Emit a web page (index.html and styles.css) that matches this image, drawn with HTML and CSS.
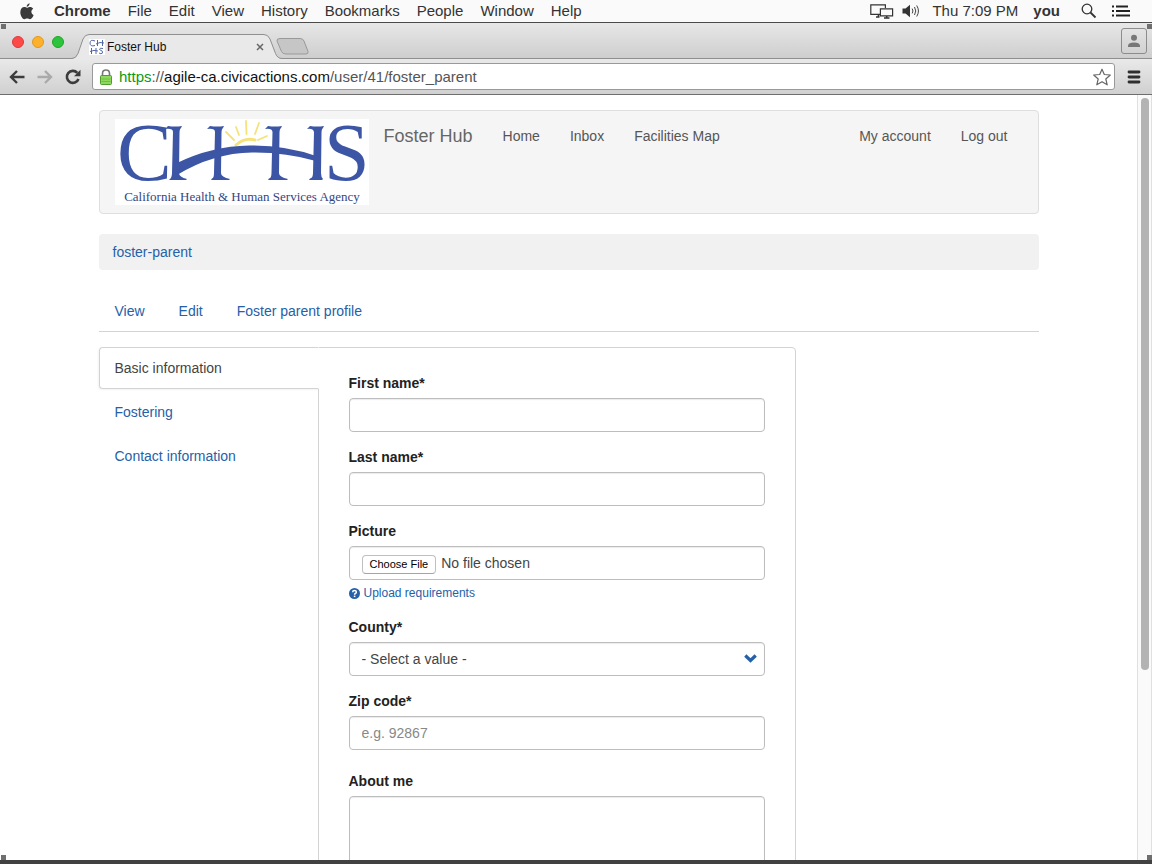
FILE: index.html
```html
<!DOCTYPE html>
<html lang="en">
<head>
<meta charset="utf-8">
<title>Foster Hub</title>
<link rel="stylesheet" href="styles.css">
</head>
<body>
<div class="desktop">
  <header class="menubar">
    <svg class="apple" width="14" height="17" viewBox="0 0 14 17" aria-hidden="true"><path d="M9.6 0.3C9.7 2 8.400 3.700 6.700 3.800C6.500 2.200 8 0.500 9.600 0.300ZM6.900 4.800C7.600 4.800 8.500 4 10 4C11.300 4 12.500 4.700 13.200 5.700C10.500 7.300 11 10.800 13.600 11.900C13 13.600 11.600 16.200 10 16.200C8.900 16.200 8.500 15.500 7.200 15.500C5.900 15.500 5.400 16.200 4.400 16.200C2.700 16.200 0.300 12.700 0.300 9.200C0.300 6 2.300 4.100 4.300 4.100C5.500 4.100 6.300 4.800 6.900 4.800Z" fill="#3a3a3a"/></svg>
    <nav class="menus" aria-label="Application menu">
      <button class="menu menu-app">Chrome</button>
      <button class="menu">File</button>
      <button class="menu">Edit</button>
      <button class="menu">View</button>
      <button class="menu">History</button>
      <button class="menu">Bookmarks</button>
      <button class="menu">People</button>
      <button class="menu">Window</button>
      <button class="menu">Help</button>
    </nav>
    <div class="status">
      <svg width="24" height="15" viewBox="0 0 24 15" fill="none" stroke="#333" stroke-width="1.200" aria-hidden="true"><path d="M10 10.400H0.800V0.800H15.400V4"/><path d="M10.400 4.800H22.600V11.800H10.400Z"/><path d="M6 13H9.500M14 14H19.500M8.500 10.500V13M16.700 12V14" stroke-width="1.600"/></svg>
      <svg class="speaker" width="18" height="14" viewBox="0 0 18 14" aria-hidden="true"><path d="M0.500 4.500H3.500L8 0.800V13.200L3.500 9.500H0.500Z" fill="#333"/><path d="M10.200 4.600Q11.700 7 10.200 9.400M12.500 3Q15 7 12.500 11M14.700 1.500Q18.200 7 14.700 12.500" fill="none" stroke="#444"/></svg>
      <span class="clock">Thu 7:09 PM</span>
      <span class="user">you</span>
      <svg class="search" width="16" height="16" viewBox="0 0 16 16" fill="none" stroke="#333" aria-hidden="true"><circle cx="6" cy="6" r="4.800" stroke-width="1.300"/><path d="M9.500 9.500L14.500 14.500" stroke-width="1.800"/></svg>
      <svg width="18" height="12" viewBox="0 0 18 12" stroke="#222" stroke-width="2" aria-hidden="true"><path d="M0 1.500H2M0 6H2M0 10.500H2M4 1.500H16M4 6H18M4 10.500H18"/></svg>
    </div>
  </header>

  <section class="window">
    <i class="mark mark-tl"></i><i class="mark mark-tr"></i><i class="mark mark-bl"></i><i class="mark mark-br"></i>
    <div class="tabstrip">
      <div class="lights">
        <button class="light red" aria-label="Close"></button>
        <button class="light amber" aria-label="Minimize"></button>
        <button class="light green" aria-label="Zoom"></button>
      </div>
      <div class="tab">
        <svg class="tab-shape" viewBox="0 0 210 25" preserveAspectRatio="none" aria-hidden="true"><path d="M0 24.500Q4 24.500 6 19.500L11 5Q13 0.500 17 0.500H192Q196 0.500 198 5L203.500 19.500Q205.500 24.500 210 24.500V25H0Z" fill="#e9e9e9"/><path d="M0 24.500Q4 24.500 6 19.500L11 5Q13 0.500 17 0.500H192Q196 0.500 198 5L203.500 19.500Q205.500 24.500 210 24.500" fill="none" stroke="#8f8f8f"/></svg>
        <svg class="favicon" width="16" height="16" viewBox="0 0 16 16" aria-hidden="true"><rect width="16" height="16" fill="#fff"/><g fill="none" stroke="#5268a8"><path d="M6 2Q1 0 1 4T6 6.500M8.500 1V7M13.500 1V7M7 5Q11 2.500 15 4M2.500 9V15M7 9V15M1 12.500Q5 10.500 9 12M14 9.500Q10.500 8.500 10.500 10.500Q14.500 12 13.500 14Q12 15.500 10 14"/></g></svg>
        <span class="tab-title">Foster Hub</span>
        <button class="tab-close" aria-label="Close tab"><svg width="8" height="8" viewBox="0 0 8 8" stroke="#666" stroke-width="1.500"><path d="M1 1L7 7M7 1L1 7"/></svg></button>
      </div>
      <button class="newtab" aria-label="New tab"><svg width="33" height="17" viewBox="0 0 33 17"><path d="M4 0.500H24Q27 0.500 28 3L32 13.500Q32.500 16 30 16H10Q6.500 16 5.500 13.500L1 3Q0.500 0.500 4 0.500Z" fill="#c6c6c6" stroke="#999"/></svg></button>
      <button class="profile" aria-label="Profile"><svg width="14" height="14" viewBox="0 0 14 14" fill="#777"><circle cx="7" cy="3.800" r="3"/><path d="M1 13V11.500Q1.500 8.500 7 8.500T13 11.500V13Z"/></svg></button>
    </div>

    <div class="toolbar">
      <button class="tool" aria-label="Back"><svg width="16" height="14" viewBox="0 0 16 14" fill="none" stroke="#3c3c3c" stroke-width="2.400"><path d="M15.500 7H2.500M8 1L2 7L8 13"/></svg></button>
      <button class="tool" aria-label="Forward"><svg width="16" height="14" viewBox="0 0 16 14" fill="none" stroke="#aaa" stroke-width="2.400"><path d="M0.500 7H13.500M8 1L14 7L8 13"/></svg></button>
      <button class="tool" aria-label="Reload"><svg width="16" height="16" viewBox="0 0 16 16"><path d="M12.300 3.800A6 6 0 1 0 13.500 10" fill="none" stroke="#3c3c3c" stroke-width="2.600"/><path d="M15.500 0.800V7.300H9Z" fill="#3c3c3c"/></svg></button>
      <div class="omnibox">
        <svg class="lock" width="12" height="16" viewBox="0 0 12 16" aria-hidden="true"><path d="M2.500 8V4.500Q2.500 1 6 1T9.500 4.500V8" fill="none" stroke="#777" stroke-width="1.600"/><rect x="0.500" y="6.500" width="11" height="9" rx="1" fill="#8ed860" stroke="#4f9d2d"/><path d="M1.500 10H10.500M1.500 12.500H10.500" stroke="#6cc03c"/></svg>
        <span class="url" role="textbox" contenteditable="true" spellcheck="false" aria-label="Address"><span class="url-scheme">https</span><span class="url-path">://</span>agile-ca.civicactions.com<span class="url-path">/user/41/foster_parent</span></span>
        <button class="star" aria-label="Bookmark this page"><svg width="20" height="18" viewBox="0 0 20 18"><path d="M10 1.200L12.300 6.500L18.300 7L13.800 11L15.200 16.800L10 13.700L4.800 16.800L6.200 11L1.700 7L7.700 6.500Z" fill="#fff" stroke="#666" stroke-width="1.200" stroke-linejoin="round"/></svg></button>
      </div>
      <button class="tool" aria-label="Menu"><svg width="14" height="14" viewBox="0 0 14 14" stroke="#2e2e2e" stroke-width="2.800" stroke-linecap="round"><path d="M2 2H12M2 7H12M2 12H12"/></svg></button>
    </div>

    <div class="viewport">
      <main class="page">
        <div class="container">
          <nav class="navbar" aria-label="Main">
            <a class="logo" href="#"><svg width="254" height="86" viewBox="0 0 254 86" role="img" aria-label="California Health and Human Services Agency">
              <rect width="254" height="86" fill="#fff"/>
              <g stroke="#f5e27a" stroke-width="1.800" fill="none" stroke-linecap="round"><path d="M121 26Q130 18 140 21" stroke-width="3"/><path d="M111 13L119 21M121 8L124 16M131 2L131.500 15M144 4L140 15M152 17L143 21"/></g>
              <g fill="#3c55a5">
                <path d="M50 10L53 7Q60 8 67 7L66 9Q64.500 10 64.500 14L64 54Q64 58 72 60L71 61H54Q57 59 57 54L58 13Q58 9 50 10Z"/>
                <path d="M92 10L95 7Q102 8 109 7L108 9Q106.500 10 106.500 14L106 54Q106 58 115 60L114 61H96L97 59.500Q99 59 99 54L100 13Q100 9 92 10Z"/>
                <path d="M150 10L153 7Q160 8 167 7L166 9Q164.500 10 164.500 14L164 54Q164 58 173 60L172 61H153L154 59.500Q156.500 59 156.500 54L157.500 13Q157 9 150 10Z"/>
                <path d="M192 10L195 7Q202 8 209 7L208 9Q206.500 10 206.500 14L206 54Q206 58 208 60L207 61H194L195 59.500Q198 59 198 54L199 13Q198 9 192 10Z"/>
                <path d="M62 44Q97 27 134 26.500Q170 26 201 37L201 42Q170 33 137 33.500Q98 34 62 56Z"/>
              </g>
              <g class="logo-letters"><text x="2" y="61">C</text><text x="209" y="61">S</text></g>
              <text class="logo-caption" x="127" y="82" text-anchor="middle">California Health &amp; Human Services Agency</text>
            </svg></a>
            <a class="brand" href="#">Foster Hub</a>
            <ul class="links">
              <li><a href="#">Home</a></li>
              <li><a href="#">Inbox</a></li>
              <li><a href="#">Facilities Map</a></li>
            </ul>
            <ul class="links links-right">
              <li><a href="#">My account</a></li>
              <li><a href="#">Log out</a></li>
            </ul>
          </nav>

          <nav class="breadcrumb" aria-label="Breadcrumb"><a href="#">foster-parent</a></nav>

          <nav class="tabs" aria-label="Profile">
            <a href="#">View</a>
            <a href="#">Edit</a>
            <a href="#">Foster parent profile</a>
          </nav>

          <div class="editor">
            <nav class="sections" aria-label="Sections">
              <a class="active" href="#">Basic information</a>
              <a href="#">Fostering</a>
              <a href="#">Contact information</a>
            </nav>
            <form class="panel">
              <div class="field"><label for="first">First name*</label><input class="control" id="first" type="text"></div>
              <div class="field"><label for="last">Last name*</label><input class="control" id="last" type="text"></div>
              <div class="field"><label for="picture">Picture</label><input class="control" id="picture" type="file">
                <a class="help" href="#"><svg width="11" height="11" viewBox="0 0 11 11" aria-hidden="true"><circle cx="5.500" cy="5.500" r="5.500" fill="#2461a9"/><path d="M3.600 4.200Q3.700 2.500 5.500 2.500T7.400 4Q7.400 5 6.300 5.500Q5.600 5.900 5.600 6.800" fill="none" stroke="#fff" stroke-width="1.500"/><rect x="4.800" y="7.600" width="1.600" height="1.500" fill="#fff"/></svg>Upload requirements</a>
              </div>
              <div class="field"><label for="county">County*</label>
                <div class="select"><select class="control" id="county"><option>- Select a value -</option></select><svg class="chevron" width="13" height="9" viewBox="0 0 13 9" aria-hidden="true"><path d="M1.300 1.500L6.500 6.500L11.700 1.500" fill="none" stroke="#2461a9" stroke-width="3.200"/></svg></div>
              </div>
              <div class="field field-zip"><label for="zip">Zip code*</label><input class="control" id="zip" type="text" placeholder="e.g. 92867"></div>
              <div class="field"><label for="about">About me</label><textarea class="control about" id="about"></textarea></div>
            </form>
          </div>
        </div>
      </main>
      <div class="scrollbar" aria-hidden="true"><div class="thumb"></div></div>
    </div>
  </section>
</div>
</body>
</html>
```
FILE: styles.css
```css
* { box-sizing: border-box; }

body {
  margin: 0;
  font-family: "Liberation Sans", Arial, sans-serif;
  font-size: 14px;
  line-height: 20px;
  color: #222;
}

button {
  padding: 0;
  border: 0;
  background: none;
  font: inherit;
  color: inherit;
}

svg { display: block; flex: none; }
a { color: #2461a9; text-decoration: none; }

.desktop {
  display: flex;
  flex-direction: column;
  height: 100vh;
  padding-bottom: 4px;
  background: #414141;
  overflow: hidden;
}

/* System menu bar */
.menubar {
  display: flex;
  align-items: center;
  flex: none;
  height: 23px;
  padding: 0 22px 0 20px;
  background: #fafafa;
  border-bottom: 1px solid #4a4a4a;
  font-size: 15px;
  color: #333;
}
.menus { display: flex; gap: 17px; margin-left: 20px; }
.menu-app, .user { font-weight: bold; }
.status { display: flex; align-items: center; margin-left: auto; }
.speaker { margin: 0 12px 0 8px; }
.user { margin: 0 21px 0 15px; }
.search { margin-right: 15px; }

/* Browser window */
.window {
  position: relative;
  display: flex;
  flex-direction: column;
  flex: 1;
  min-height: 0;
}
.mark {
  position: absolute;
  width: 5px;
  height: 5px;
  background: #6f6f6f;
  z-index: 3;
}
.mark-tl { top: 1px; left: 1px; }
.mark-tr { top: 1px; right: 0; }
.mark-bl { bottom: 0; left: 1px; }
.mark-br { bottom: 0; right: 0; }

.tabstrip {
  display: flex;
  align-items: flex-end;
  flex: none;
  height: 36px;
  padding: 0 5px 0 12px;
  background: linear-gradient(#e7e7e7, #cecece);
  border-bottom: 1px solid #8f8f8f;
}
.lights { display: flex; gap: 8px; padding-bottom: 10px; }
.light { width: 12px; height: 12px; border-radius: 50%; border: 1px solid; }
.red { background: #fc4a48; border-color: #e0383a; }
.amber { background: #fdb12a; border-color: #e09a1c; }
.green { background: #2bc43a; border-color: #1fa52b; }

.tab {
  position: relative;
  display: flex;
  align-items: center;
  width: 210px;
  height: 25px;
  margin: 0 0 -1px 8px;
  padding: 0 18px 0 17px;
}
.tab-shape { position: absolute; inset: 0; width: 100%; height: 100%; }
.favicon, .tab-title, .tab-close { position: relative; }
.tab-title { margin-left: 2px; font-size: 12px; color: #111; }
.tab-close { margin-left: auto; }
.newtab { margin: 0 0 3px -6px; }
.profile {
  display: grid;
  place-items: center;
  width: 26px;
  height: 26px;
  margin: 0 0 4px auto;
  border: 1px solid #8c8c8c;
  border-radius: 3px;
}

.toolbar {
  display: flex;
  align-items: center;
  flex: none;
  gap: 12px;
  height: 36px;
  padding: 0 11px 0 9px;
  background: linear-gradient(#e9e9e9, #d0d0d0);
  border-bottom: 1px solid #6e6e6e;
}
.omnibox {
  display: flex;
  align-items: center;
  flex: 1;
  height: 27px;
  margin-left: -1px;
  padding: 0 2px 0 7px;
  background: #fff;
  border: 1px solid #999;
  border-radius: 3px;
}
.url {
  flex: 1;
  margin-left: 7px;
  font-size: 15px;
  color: #111;
  outline: 0;
  white-space: nowrap;
  overflow: hidden;
}
.url-scheme { color: #0a9a10; }
.url-path { color: #555; }

.viewport { display: flex; flex: 1; min-height: 0; background: #fff; }
.page { flex: 1; overflow: hidden; }
.scrollbar {
  flex: none;
  width: 15px;
  padding: 3px 3px 0;
  background: #fafafa;
  border: solid #e0e0e0;
  border-width: 0 1px;
}
.thumb { width: 8px; height: 75%; border-radius: 4px; background: #b3b3b3; }

/* Site */
.container { max-width: 940px; margin: 0 auto; padding-top: 15px; }
.navbar {
  display: flex;
  align-items: flex-start;
  padding: 8px 30px 8px 15px;
  background: #f5f5f5;
  border: 1px solid #dedede;
  border-radius: 4px;
}
.logo-letters { font-family: "Liberation Serif", serif; font-size: 82px; fill: #3c55a5; }
.logo-caption { font-family: "Liberation Serif", serif; font-size: 13px; fill: #34457f; }
.brand { margin: 7px 30px 0 15px; font-size: 18px; color: #666; }
.links { display: flex; gap: 30px; margin: 7px 0 0; padding: 0; list-style: none; }
.links a { color: #555; }
.links-right { margin-left: auto; }

.breadcrumb {
  margin: 20px 0;
  padding: 8px 14px;
  background: #f1f1f1;
  border-radius: 4px;
}
.tabs {
  display: flex;
  gap: 2px;
  border-bottom: 1px solid #d3d3d3;
}
.tabs a { padding: 11px 16px 10px; }

.editor {
  display: grid;
  grid-template-columns: 220px minmax(0, 1fr);
  max-width: 697px;
  margin-top: 15px;
}
.sections { display: flex; flex-direction: column; gap: 2px; z-index: 1; }
.sections a { padding: 10px 15px; border: 1px solid transparent; }
.sections .active {
  color: #444;
  background: #fff;
  border-color: #d3d3d3;
  border-right-color: #fff;
  border-radius: 4px 0 0 4px;
  box-shadow: -1px 1px 2px rgba(0, 0, 0, 0.05);
}
.panel {
  margin-left: -1px;
  padding: 25px 30px;
  border: 1px solid #d3d3d3;
  border-radius: 0 4px 4px 0;
}
.field { margin-bottom: 15px; }
.field-zip { margin-bottom: 21px; }
.field label { display: block; margin-bottom: 5px; font-weight: bold; }
.control {
  display: block;
  width: 100%;
  height: 34px;
  padding: 6px 12px;
  font: inherit;
  color: #444;
  background: #fff;
  border: 1px solid #bdbdbd;
  border-radius: 4px;
  box-shadow: inset 0 1px 1px rgba(0, 0, 0, 0.08);
  outline: 0;
}
.control::placeholder { color: #888; }
.control::file-selector-button {
  height: 19px;
  margin: 0 5px 0 0;
  padding: 0 7px;
  font-family: inherit;
  font-size: 11px;
  color: #000;
  background: #fff;
  border: 1px solid #c0c0c0;
  border-bottom-color: #a5a5a5;
  border-radius: 4px;
}
.select { position: relative; }
.select .control { appearance: none; }
.chevron { position: absolute; top: 12px; right: 8px; }
.help { display: flex; align-items: center; gap: 4px; margin-top: 5px; font-size: 12px; line-height: 17px; }
.about { height: 96px; resize: none; }
```
